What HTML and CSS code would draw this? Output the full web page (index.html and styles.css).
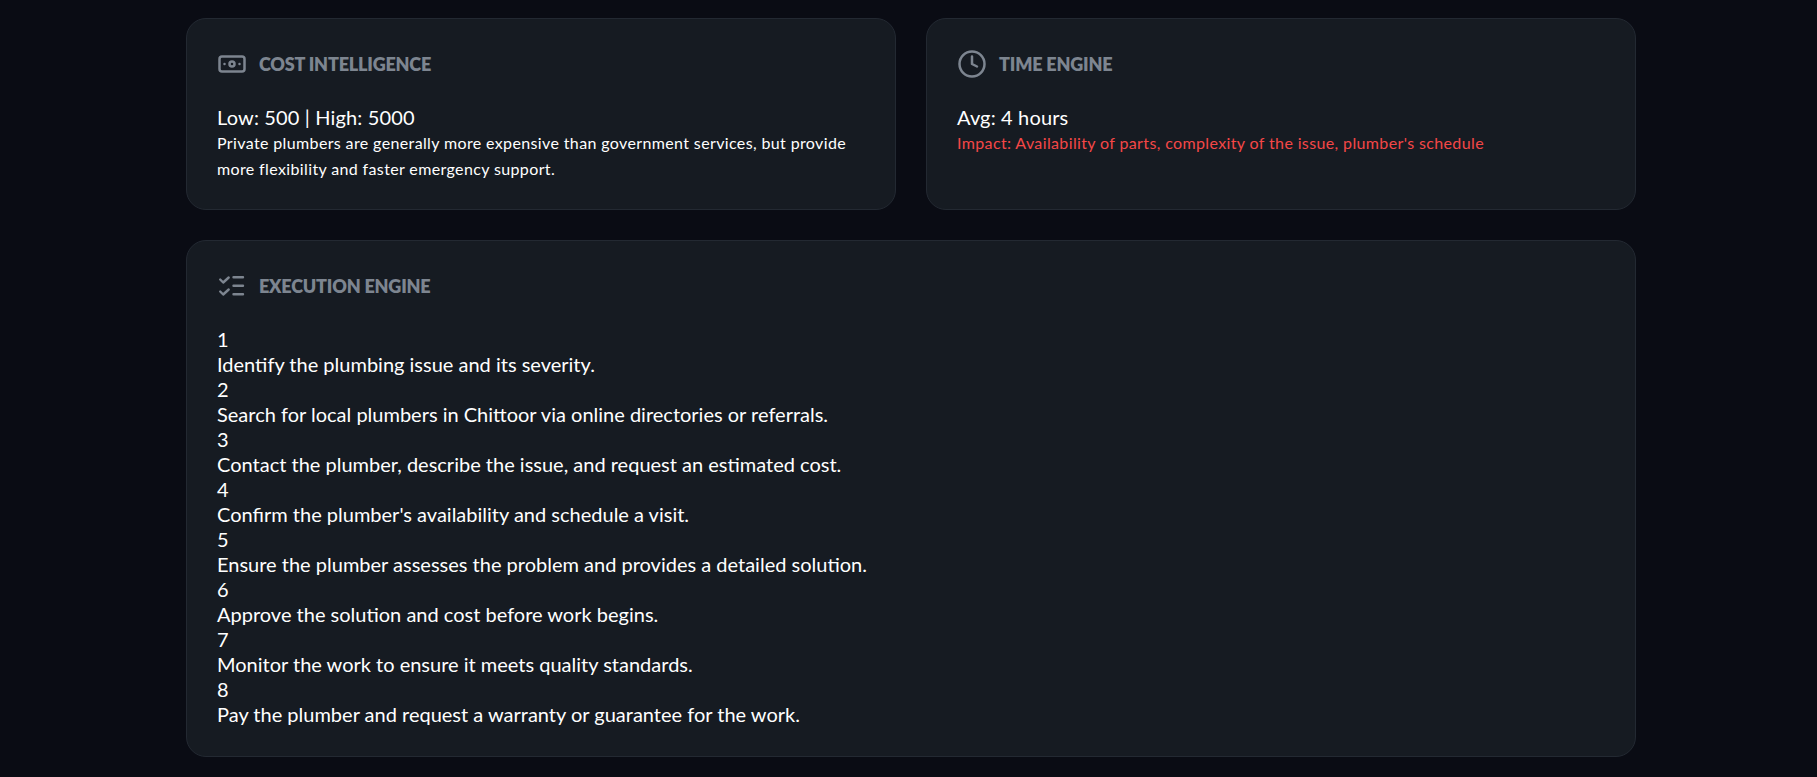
FILE: index.html
```html
<!DOCTYPE html>
<html lang="en">
<head>
    <meta charset="UTF-8">
    <meta name="viewport" content="width=device-width, initial-scale=1.0">
    <title>Plumber Plan</title>
    <link rel="stylesheet" href="styles.css">
</head>
<body>
    <div class="container">
        <div class="top-row">
            <section class="card">
                <div class="card-head">
                    <svg class="icon" viewBox="0 0 24 24" fill="none" stroke="currentColor" stroke-width="2" stroke-linecap="round" stroke-linejoin="round">
                        <rect x="2" y="6" width="20" height="12" rx="2"/>
                        <circle cx="12" cy="12" r="2"/>
                        <path d="M6 12h.01M18 12h.01"/>
                    </svg>
                    <h2>COST INTELLIGENCE</h2>
                </div>
                <p class="value">Low: 500 | High: 5000</p>
                <p class="note">Private plumbers are generally more expensive than government services, but provide more flexibility and faster emergency support.</p>
            </section>
            <section class="card">
                <div class="card-head">
                    <svg class="icon" viewBox="0 0 24 24" fill="none" stroke="currentColor" stroke-width="2" stroke-linecap="round" stroke-linejoin="round">
                        <circle cx="12" cy="12" r="10"/>
                        <path d="M12 6v6l4 2"/>
                    </svg>
                    <h2>TIME ENGINE</h2>
                </div>
                <p class="value">Avg: 4 hours</p>
                <p class="note impact">Impact: Availability of parts, complexity of the issue, plumber's schedule</p>
            </section>
        </div>
        <section class="card card-wide">
            <div class="card-head">
                <svg class="icon" viewBox="0 0 30 30" fill="none" stroke="currentColor" stroke-width="2.4" stroke-linecap="round" stroke-linejoin="round">
                    <path d="M3.2 8.5l3 3 5.5-5M3.2 20.5l3 3 5.5-5"/>
                    <path d="M16.5 6.3H26M16.5 14.7H26M16.5 23.3H26"/>
                </svg>
                <h2>EXECUTION ENGINE</h2>
            </div>
            <ol class="steps">
                <li><span>1</span><p>Identify the plumbing issue and its severity.</p></li>
                <li><span>2</span><p>Search for local plumbers in Chittoor via online directories or referrals.</p></li>
                <li><span>3</span><p>Contact the plumber, describe the issue, and request an estimated cost.</p></li>
                <li><span>4</span><p>Confirm the plumber's availability and schedule a visit.</p></li>
                <li><span>5</span><p>Ensure the plumber assesses the problem and provides a detailed solution.</p></li>
                <li><span>6</span><p>Approve the solution and cost before work begins.</p></li>
                <li><span>7</span><p>Monitor the work to ensure it meets quality standards.</p></li>
                <li><span>8</span><p>Pay the plumber and request a warranty or guarantee for the work.</p></li>
            </ol>
        </section>
    </div>
</body>
</html>
```

FILE: styles.css
```css
body {
    margin: 0;
    background-color: #0a0c14;
    color: #fff;
    font-family: Lato, "Open Sans", sans-serif;
}
.container {
    width: 1450px;
    margin-left: 186px;
    padding: 18px 0 20px;
    display: flex;
    flex-direction: column;
    gap: 30px;
}
.top-row {
    display: grid;
    grid-template-columns: 1fr 1fr;
    gap: 30px;
}
.card {
    background-color: #161b22;
    border: 1px solid #232932;
    border-radius: 20px;
    padding: 30px 30px 27.8px;
}
.card-wide {
    padding-bottom: 29px;
}
.card-head {
    display: flex;
    align-items: center;
    gap: 12px;
    height: 30px;
    margin-bottom: 26px;
    color: #7d8590;
}
.card-head h2 {
    margin: 0;
    font-size: 18px;
    font-weight: 800;
    letter-spacing: -0.2px;
}
.icon {
    width: 30px;
    height: 30px;
    flex-shrink: 0;
}
.value {
    margin: 0;
    font-size: 20px;
    line-height: 25px;
    letter-spacing: 0.15px;
}
.note {
    margin: 0;
    font-size: 16px;
    line-height: 25.6px;
    letter-spacing: 0.37px;
}
.impact {
    color: #f44747;
}
.steps {
    list-style: none;
    margin: 0;
    padding: 0;
    font-size: 20px;
    line-height: 25px;
}
.steps p {
    margin: 0;
}
```
